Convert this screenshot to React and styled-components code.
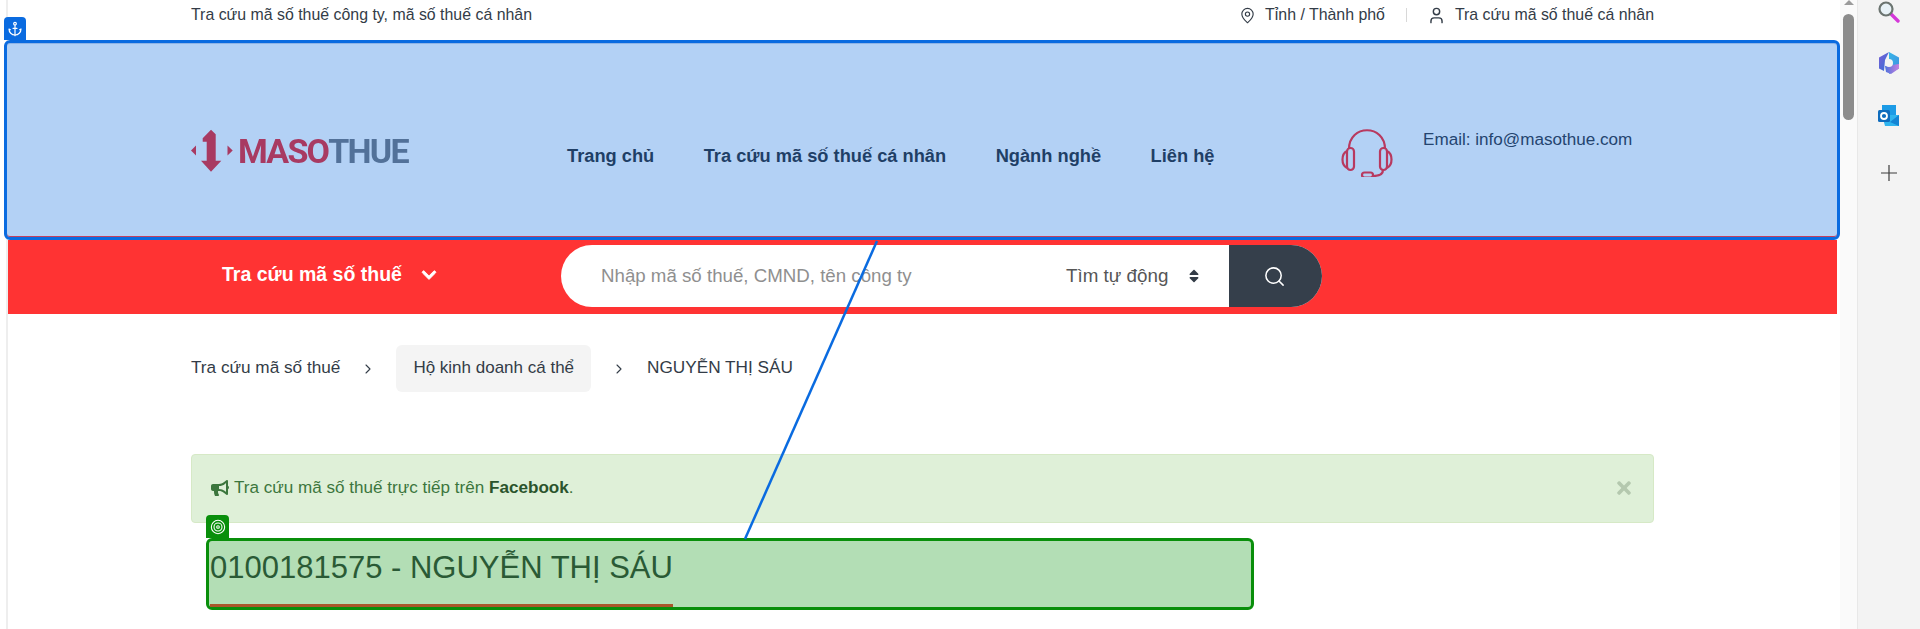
import React from "react";
import styled, { createGlobalStyle } from "styled-components";
import { Anchor, ChevronRight, MapPin, Search, Target, User } from "lucide-react";
import { FaBullhorn, FaChevronDown, FaSort, FaTimes } from "react-icons/fa";

const Global = createGlobalStyle`
  html, body { margin: 0; padding: 0; height: 100%; overflow: hidden; background: #fff; }
  body { font-family: "Liberation Sans", Arial, sans-serif; font-size: 16px; color: #333c47; }
  * { box-sizing: border-box; }
`;

const Window = styled.div`
  position: relative;
  display: flex;
  width: 1920px;
  height: 629px;
  overflow: hidden;
`;
const Gutter = styled.div`
  width: 8px;
  flex: none;
  background: #fff;
  box-shadow: inset -2px 0 0 #eeeeee;
`;
const Main = styled.main`
  width: 1829px;
  flex: none;
`;
const Container = styled.div`
  padding: 0 183px;
`;
const TopBar = styled(Container)`
  height: 40px;
  display: flex;
  align-items: center;
  justify-content: space-between;
  padding-bottom: 10px;
  font-size: 15.9px;
  color: #333c47;
`;
const TopLinks = styled.div`
  display: flex;
  align-items: center;
`;
const TopLink = styled.span`
  display: flex;
  align-items: center;
  gap: 9px;
`;
const TopDivider = styled.span`
  width: 1px;
  height: 14px;
  background: #d8d8d8;
  margin: 0 20px 0 21px;
`;
const Header = styled.header`
  position: relative;
  height: 200px;
  margin: 0 -3px 0 -4px;
  background: #b3d1f5;
  border: 3px solid #0a6be0;
  border-radius: 6px;
  box-shadow: inset 0 1px 0 #8fb4e6, inset 0 -1px 0 #c2405e;
  display: flex;
  align-items: center;
  padding: 28px 0 0 184px;
  color: #24446f;
`;
const AnchorTag = styled.span`
  position: absolute;
  left: -3px;
  top: -26px;
  width: 22px;
  height: 23px;
  background: #0a6be0;
  border-radius: 4px 4px 0 0;
  color: #fff;
  display: flex;
  align-items: center;
  justify-content: center;
`;
const Logo = styled.div`
  display: flex;
  align-items: center;
  width: 376px;
  margin-top: -6px;
  filter: blur(0.4px);
`;
const LogoMark = styled.svg`
  margin-right: 5px;
`;
const LogoWord = styled.span`
  font-family: Roboto, sans-serif;
  font-weight: 700;
  font-size: 34px;
  letter-spacing: -1.75px;
  line-height: 1;
  color: ${(p) => p.$color};
`;
const Nav = styled.nav`
  display: flex;
  gap: 49.5px;
  width: 774px;
  padding-top: 4px;
  font-size: 18.25px;
  font-weight: 700;
  color: #1f3f66;
`;
const Contact = styled.div`
  display: flex;
  align-items: flex-start;
  gap: 31px;
  margin-top: -4px;
`;
const Email = styled.span`
  font-size: 17.1px;
  margin-top: 3px;
  margin-left: -1px;
  line-height: 20px;
`;
const RedBar = styled.div`
  height: 74px;
  background: #ff3333;
  display: flex;
  align-items: center;
  padding-left: 214px;
`;
const Category = styled.div`
  width: 339px;
  display: flex;
  align-items: center;
  gap: 19px;
  padding-bottom: 5px;
  color: #fff;
  font-size: 19.5px;
  font-weight: 700;
`;
const SearchBox = styled.div`
  width: 761px;
  height: 62px;
  margin-top: -2px;
  border-radius: 31px;
  background: #fff;
  display: flex;
  align-items: center;
  overflow: hidden;
`;
const Placeholder = styled.span`
  width: 505px;
  padding-left: 40px;
  color: #8f8f8f;
  font-size: 18.7px;
  white-space: nowrap;
`;
const Mode = styled.div`
  width: 163px;
  display: flex;
  align-items: center;
  gap: 18px;
  color: #565656;
  font-size: 18.8px;
  white-space: nowrap;
`;
const SearchButton = styled.div`
  flex: 1;
  height: 100%;
  background: #353f4b;
  color: #fff;
  display: flex;
  align-items: center;
  justify-content: center;
  padding-right: 2px;
`;
const Crumbs = styled(Container)`
  display: flex;
  align-items: center;
  margin-top: 31px;
  height: 47px;
  font-size: 17.2px;
  color: #333c47;
`;
const Crumb = styled.span`
  white-space: nowrap;
  margin-top: -2px;
`;
const CrumbPill = styled.span`
  height: 47px;
  padding: 0 17px 2px;
  display: flex;
  align-items: center;
  font-size: 17px;
  background: #f4f4f4;
  border-radius: 6px;
`;
const Sep = styled.span`
  display: flex;
  justify-content: center;
  width: ${(p) => p.$w}px;
  color: #333c47;
`;
const Alert = styled.div`
  position: relative;
  margin-top: 62px;
  height: 69px;
  padding: 0 19px 2px;
  background: #dff0d8;
  border: 1px solid #d6e9c6;
  border-radius: 4px;
  display: flex;
  align-items: center;
  gap: 5px;
  font-size: 17.1px;
  color: #3c763d;
  b { color: #2b542c; }
`;
const CloseX = styled.span`
  margin-left: auto;
  margin-right: 0;
  color: #b4c8ae;
  display: flex;
`;
const TitleBox = styled.div`
  position: relative;
  width: 1048px;
  height: 72px;
  margin: 15px 0 0 15px;
  background: #b3deb5;
  border: 3px solid #098f0b;
  border-radius: 6px;
  padding: 0 1px;
`;
const TargetTag = styled.span`
  position: absolute;
  left: -3px;
  top: -26px;
  width: 23px;
  height: 23px;
  background: #098f0b;
  border-radius: 4px 4px 0 0;
  color: #fff;
  display: flex;
  align-items: center;
  justify-content: center;
`;
const Title = styled.h1`
  display: inline-block;
  margin: 0;
  height: 66px;
  padding-top: 9px;
  font-size: 31px;
  font-weight: 400;
  line-height: 36px;
  color: #2a5a35;
  border-bottom: 3px solid #a9562a;
`;
const Scrollbar = styled.div`
  position: relative;
  width: 17px;
  margin-left: 3px;
  flex: none;
  background: #fafafa;
`;
const ScrollArrow = styled.span`
  position: absolute;
  left: 4px;
  top: 0;
  border-left: 5px solid transparent;
  border-right: 5px solid transparent;
  border-bottom: 5px solid #9b9b9b;
`;
const ScrollThumb = styled.span`
  position: absolute;
  left: 3px;
  top: 14px;
  width: 11px;
  height: 106px;
  border-radius: 6px;
  background: #8c8c8c;
`;
const Sidebar = styled.aside`
  flex: 1;
  background: #f3f3f3;
  border-left: 1px solid #e8e8e8;
  display: flex;
  flex-direction: column;
  align-items: center;
  padding-top: 0;
`;
const SideIcon = styled.span`
  display: flex;
  height: ${(p) => p.$h}px;
  align-items: center;
`;
const Connector = styled.svg`
  position: absolute;
  inset: 0;
  pointer-events: none;
`;

const MarkShape = () => (
  <LogoMark width="42" height="44" viewBox="0 0 42 44">
    <g fill="#a83a62">
      <polygon points="0,21.5 5,16.5 5,26.5" />
      <polygon points="36.5,16.5 36.5,26.5 41.7,21.5" />
      <polygon points="20,0.7 24.7,5.3 24.7,31.7 30.3,31.7 20,42.7 15,37.3 10,31.7 15.7,31.7 15.7,12.7 11.7,12.7 11.7,9.3" />
    </g>
  </LogoMark>
);

const Headset = () => (
  <svg width="52" height="50" viewBox="0 0 52 50" fill="none" stroke="#b8395f" strokeWidth="2.2">
    <path d="M8 22 C8 -3 44 -3 44 22" />
    <rect x="6" y="21" width="7" height="22" rx="3.5" />
    <path d="M6 24 C0 27 0 38 6 41" />
    <rect x="39" y="21" width="7" height="22" rx="3.5" />
    <path d="M46 24 C52 27 52 38 46 41" />
    <path d="M42 43 C42 48 38 49 32 49" />
    <rect x="21" y="45.5" width="11" height="5" rx="2.5" />
  </svg>
);

const GlassIcon = () => (
  <svg width="22" height="22" viewBox="0 0 22 22" fill="none">
    <path d="M13 13 L20 20" stroke="#d438d8" strokeWidth="3.4" strokeLinecap="round" />
    <circle cx="8" cy="8" r="6.5" fill="#e8f2f7" stroke="#6b7470" strokeWidth="2.2" />
  </svg>
);

const CopilotIcon = () => (
  <svg width="22" height="24" viewBox="0 0 22 24">
    <defs>
      <linearGradient id="cpA" x1="0" y1="0" x2="1" y2="1">
        <stop offset="0" stopColor="#7a5fd6" />
        <stop offset="1" stopColor="#2f6fd6" />
      </linearGradient>
      <linearGradient id="cpB" x1="0" y1="0" x2="1" y2="1">
        <stop offset="0" stopColor="#37b6e8" />
        <stop offset="1" stopColor="#3f8fe0" />
      </linearGradient>
      <linearGradient id="cpC" x1="0" y1="0" x2="1" y2="0">
        <stop offset="0" stopColor="#4d72dc" />
        <stop offset="1" stopColor="#c680e0" />
      </linearGradient>
    </defs>
    <path d="M11 1 L21 6.5 L21 17.5 L11 23 Z" fill="url(#cpB)" />
    <path d="M11 1 L1 6.5 L1 17.5 L6 20 L7 9 Z" fill="url(#cpA)" />
    <path d="M7 15 L21 13 L21 17.5 L13 23 L8 21 Z" fill="url(#cpC)" />
    <circle cx="11" cy="12" r="4" fill="#f3f3f3" />
  </svg>
);

const OutlookIcon = () => (
  <svg width="22" height="24" viewBox="0 0 22 24">
    <rect x="4" y="1" width="14" height="12" fill="#1c9be6" />
    <path d="M4 11 H21 V22 H7 Z" fill="#2fb4ee" />
    <path d="M21 11 L12 18 L21 22 Z" fill="#1484d4" />
    <rect x="0" y="6" width="12" height="12" rx="1.5" fill="#0f6cbd" />
    <circle cx="6" cy="12" r="3" fill="none" stroke="#fff" strokeWidth="1.8" />
  </svg>
);

export default function App() {
  return (
    <Window>
      <Global />
      <Gutter />
      <Main>
        <TopBar>
          <span>Tra cứu mã số thuế công ty, mã số thuế cá nhân</span>
          <TopLinks>
            <TopLink>
              <MapPin size={17} strokeWidth={1.6} />
              Tỉnh / Thành phố
            </TopLink>
            <TopDivider />
            <TopLink>
              <User size={19} strokeWidth={1.8} />
              Tra cứu mã số thuế cá nhân
            </TopLink>
          </TopLinks>
        </TopBar>
        <Header>
          <AnchorTag>
            <Anchor size={16} strokeWidth={1.8} />
          </AnchorTag>
          <Logo>
            <MarkShape />
            <LogoWord $color="#a83a62">MASO</LogoWord>
            <LogoWord $color="#527199">THUE</LogoWord>
          </Logo>
          <Nav>
            <span>Trang chủ</span>
            <span>Tra cứu mã số thuế cá nhân</span>
            <span>Ngành nghề</span>
            <span>Liên hệ</span>
          </Nav>
          <Contact>
            <Headset />
            <Email>Email: info@masothue.com</Email>
          </Contact>
        </Header>
        <RedBar>
          <Category>
            Tra cứu mã số thuế
            <FaChevronDown size={16} stroke="currentColor" strokeWidth={30} />
          </Category>
          <SearchBox>
            <Placeholder>Nhập mã số thuế, CMND, tên công ty</Placeholder>
            <Mode>
              Tìm tự động
              <FaSort size={16} color="#333c47" />
            </Mode>
            <SearchButton>
              <Search size={23} strokeWidth={1.6} />
            </SearchButton>
          </SearchBox>
        </RedBar>
        <Crumbs>
          <Crumb>Tra cứu mã số thuế</Crumb>
          <Sep $w={56}>
            <ChevronRight size={16} strokeWidth={1.6} />
          </Sep>
          <CrumbPill>Hộ kinh doanh cá thể</CrumbPill>
          <Sep $w={56}>
            <ChevronRight size={16} strokeWidth={1.6} />
          </Sep>
          <Crumb>NGUYỄN THỊ SÁU</Crumb>
        </Crumbs>
        <Container>
          <Alert>
            <FaBullhorn size={18} />
            <span>
              Tra cứu mã số thuế trực tiếp trên <b>Facebook</b>.
            </span>
            <CloseX>
              <FaTimes size={20} />
            </CloseX>
          </Alert>
          <TitleBox>
            <TargetTag>
              <Target size={16} strokeWidth={1.6} />
            </TargetTag>
            <Title>0100181575 - NGUYỄN THỊ SÁU</Title>
          </TitleBox>
        </Container>
      </Main>
      <Scrollbar>
        <ScrollArrow />
        <ScrollThumb />
      </Scrollbar>
      <Sidebar>
        <SideIcon $h={24}><GlassIcon /></SideIcon>
        <SideIcon $h={78}><CopilotIcon /></SideIcon>
        <SideIcon $h={28}><OutlookIcon /></SideIcon>
        <SideIcon $h={86}>
          <svg width="16" height="16" viewBox="0 0 16 16" stroke="#3d3d3d" strokeWidth="1.2"><path d="M8 0V16M0 8H16" /></svg>
        </SideIcon>
      </Sidebar>
      <Connector width="1920" height="629">
        <line x1="877" y1="241" x2="745" y2="539" stroke="#0a6be0" strokeWidth="2.5" />
      </Connector>
    </Window>
  );
}
